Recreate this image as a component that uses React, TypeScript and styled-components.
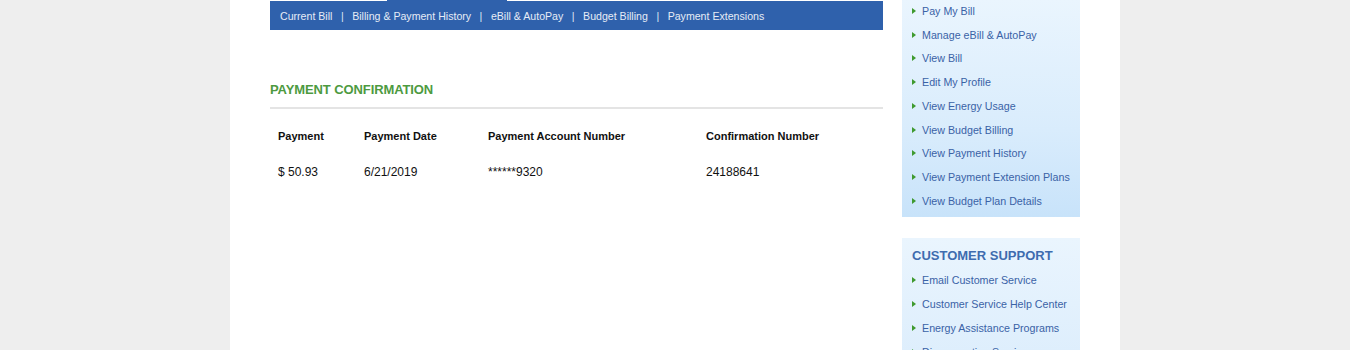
import { FC } from 'react';
import styled, { createGlobalStyle } from 'styled-components';

const GlobalStyle = createGlobalStyle`
  html, body {
    margin: 0;
    padding: 0;
    background: #eeeeee;
    font-family: 'Liberation Sans', Arial, sans-serif;
    overflow: hidden;
  }
`;

const tabs = ['Current Bill', 'Billing & Payment History', 'eBill & AutoPay', 'Budget Billing', 'Payment Extensions'];

const accountLinks = [
  'Pay My Bill',
  'Manage eBill & AutoPay',
  'View Bill',
  'Edit My Profile',
  'View Energy Usage',
  'View Budget Billing',
  'View Payment History',
  'View Payment Extension Plans',
  'View Budget Plan Details',
];

const supportLinks = [
  'Email Customer Service',
  'Customer Service Help Center',
  'Energy Assistance Programs',
  'Disconnection Services',
];

const columns = [
  { label: 'Payment', value: '$ 50.93' },
  { label: 'Payment Date', value: '6/21/2019' },
  { label: 'Payment Account Number', value: '******9320' },
  { label: 'Confirmation Number', value: '24188641' },
];

const App: FC = () => (
  <>
    <GlobalStyle />
    <Page>
      <Main>
        <SubNav>
          {tabs.map((t, i) => (
            <NavItem key={t} first={i === 0}>{t}</NavItem>
          ))}
        </SubNav>
        <Heading>PAYMENT CONFIRMATION</Heading>
        <Table>
          {columns.map(c => <Th key={c.label}>{c.label}</Th>)}
          {columns.map(c => <Td key={c.label}>{c.value}</Td>)}
        </Table>
      </Main>
      <Sidebar>
        <SideBox>
          {accountLinks.map(l => <SideLink key={l}>{l}</SideLink>)}
        </SideBox>
        <SideBox support>
          <SideTitle>CUSTOMER SUPPORT</SideTitle>
          {supportLinks.map(l => <SideLink key={l} tall>{l}</SideLink>)}
        </SideBox>
      </Sidebar>
    </Page>
  </>
);

export default App;

const Page = styled.div`
  width: 890px;
  height: 350px;
  margin: 0 auto;
  background: #fff;
  display: flex;
  align-items: flex-start;
  gap: 19px;
  padding: 0 40px;
  box-sizing: border-box;
`;

const Main = styled.div`
  width: 613px;
  flex-shrink: 0;
`;

const SubNav = styled.nav`
  margin-top: 1px;
  height: 29px;
  background: #2f61ac;
  display: flex;
  align-items: center;
  padding-left: 10px;
  position: relative;

  /* active tab pokes up above the bar */
  &::before {
    content: '';
    position: absolute;
    top: -1px;
    left: 117px;
    width: 120px;
    height: 1px;
    background: #2f61ac;
  }
`;

const NavItem = styled.a<{ first?: boolean }>`
  color: #e6ecf6;
  font-size: 10.6px;
  white-space: nowrap;
  display: flex;
  align-items: center;

  &::before {
    content: '|';
    display: ${p => (p.first ? 'none' : 'inline')};
    margin: 0 8.5px;
    color: #dfe7f3;
  }
`;

const Heading = styled.h2`
  margin: 52px 0 0;
  padding-bottom: 10px;
  border-bottom: 2px solid #e4e4e4;
  color: #4d9a3f;
  font-size: 13px;
  font-weight: bold;
  letter-spacing: -0.1px;
`;

const Table = styled.div`
  display: grid;
  grid-template-columns: 86px 124px 218px 1fr;
  padding: 0 8px;
  margin-top: 19px;
`;

const Th = styled.div`
  font-size: 11px;
  font-weight: bold;
  color: #111;
  height: 16px;
  line-height: 16px;
`;

const Td = styled.div`
  font-size: 12px;
  color: #111;
  margin-top: 20px;
  height: 16px;
  line-height: 16px;
`;

const Sidebar = styled.aside`
  width: 178px;
  flex-shrink: 0;
  display: flex;
  flex-direction: column;
  gap: 21px;
`;

const SideBox = styled.div<{ support?: boolean }>`
  padding: ${p => (p.support ? '8px 10px 4px' : '0 10px 4px')};
  margin-top: ${p => (p.support ? '0' : '-1px')};
  background: ${p =>
    p.support
      ? 'linear-gradient(to bottom, #eaf5fe 0%, #dcedfc 100%)'
      : 'linear-gradient(to bottom, #eaf5fe 0%, #d9ecfc 60%, #c8e3fa 100%)'};
`;

const SideTitle = styled.h3`
  margin: 0 0 2px;
  color: #3e6caf;
  font-size: 13px;
  font-weight: bold;
  height: 20px;
  line-height: 20px;
`;

const SideLink = styled.a<{ tall?: boolean }>`
  display: flex;
  align-items: center;
  height: ${p => (p.tall ? '24px' : '23.75px')};
  font-size: 10.7px;
  color: #3a62a6;
  white-space: nowrap;

  &::before {
    content: '';
    width: 0;
    height: 0;
    border-top: 3.5px solid transparent;
    border-bottom: 3.5px solid transparent;
    border-left: 4px solid #3f9a2f;
    margin-right: 6px;
  }
`;
